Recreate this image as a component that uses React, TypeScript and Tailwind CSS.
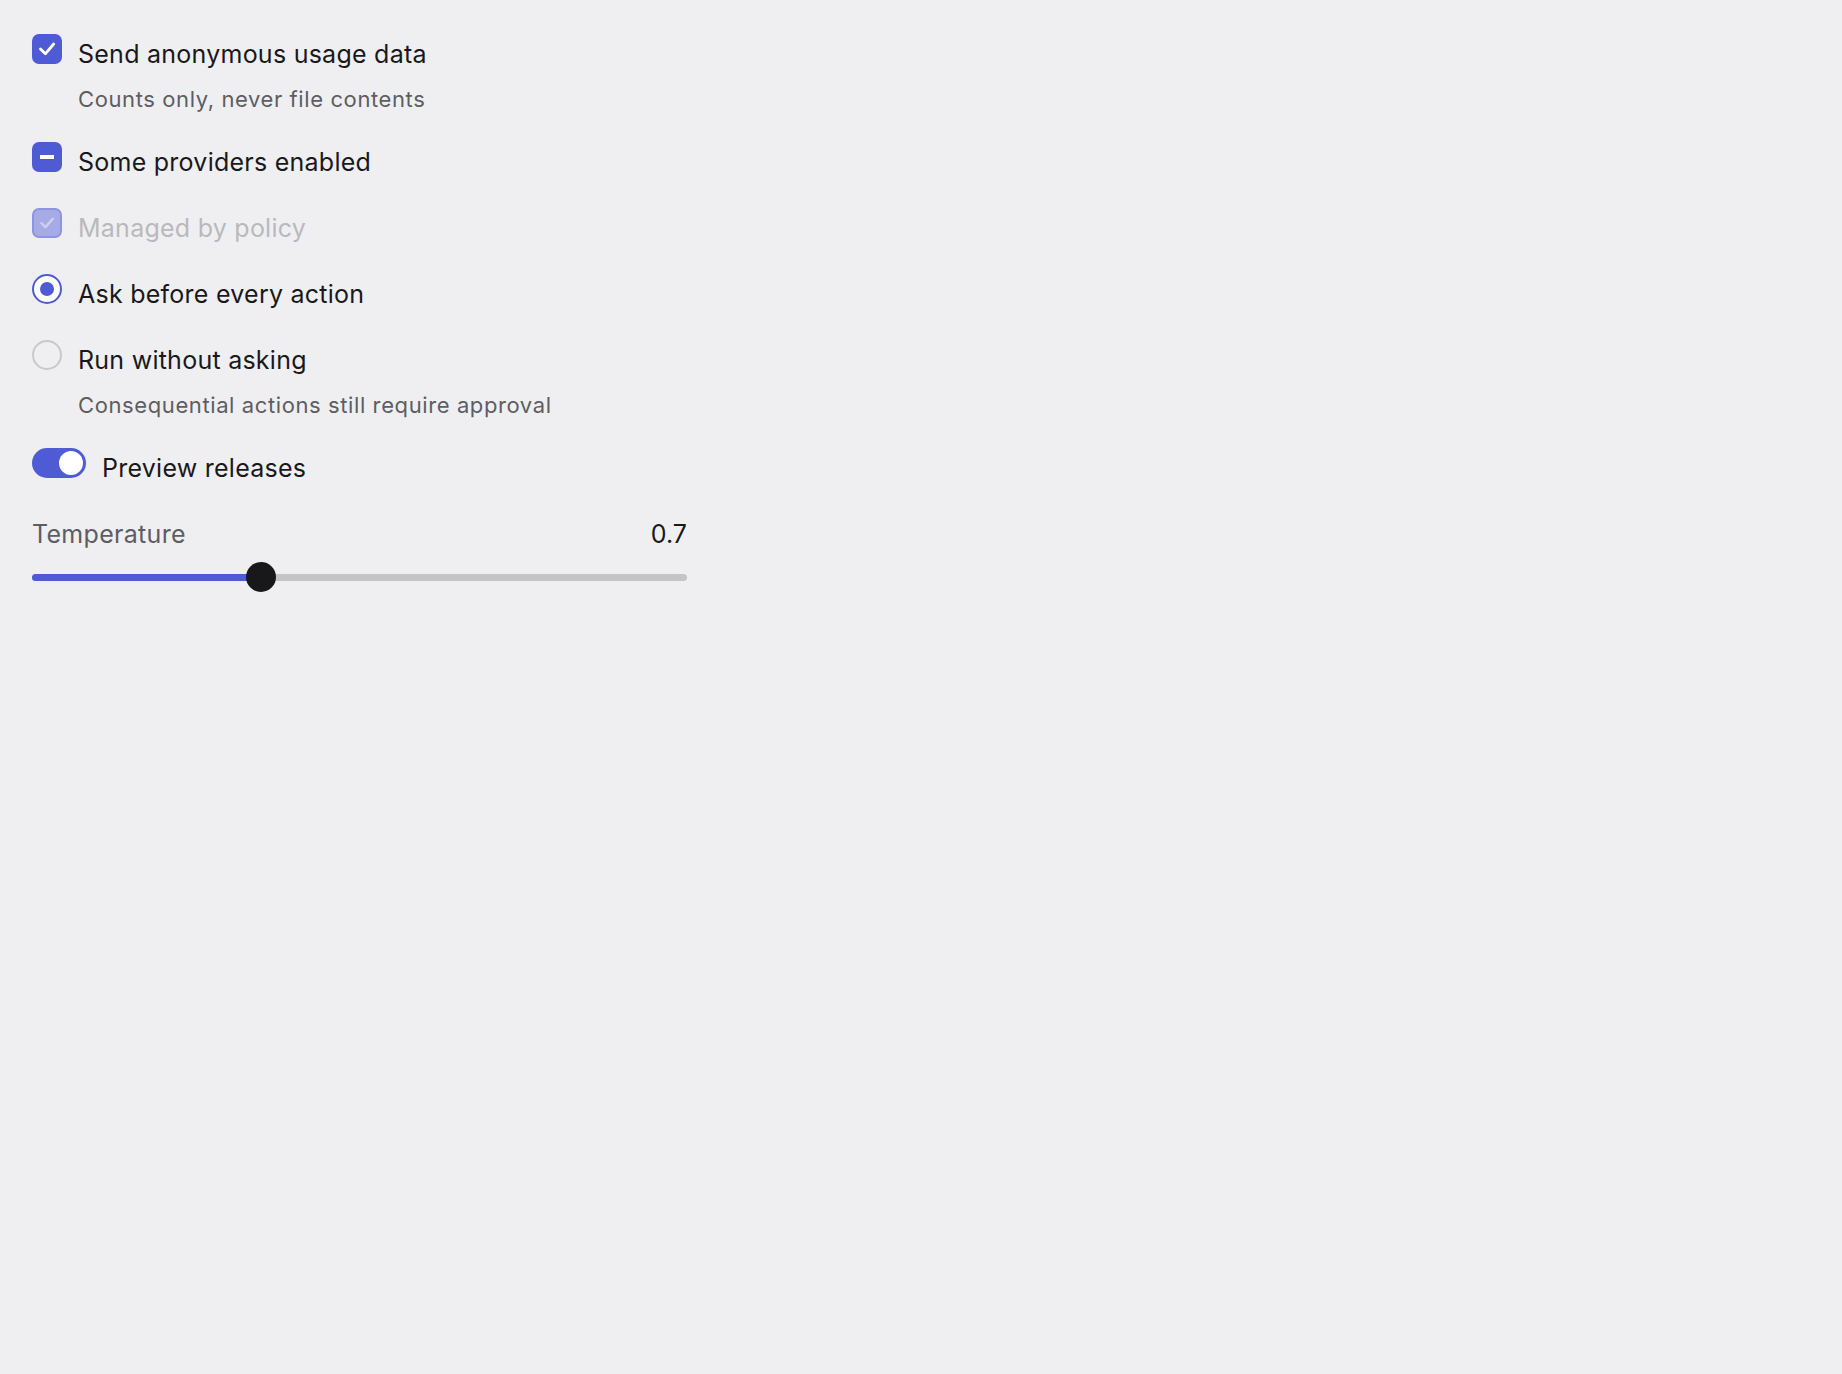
import React from "react";

type Control = "checked" | "mixed" | "disabled" | "radio-on" | "radio-off" | "switch-on";

const CheckMark = ({ className }: { className?: string }) => (
  <svg viewBox="0 0 30 30" className={className} fill="none">
    <path
      d="M8.5 15l4.8 4.8 8.4-9.8"
      stroke="currentColor"
      strokeWidth="2.8"
      strokeLinecap="round"
      strokeLinejoin="round"
    />
  </svg>
);

function ControlBox({ kind }: { kind: Control }) {
  if (kind === "checked")
    return (
      <span className="flex size-[30px] items-center justify-center rounded-[7px] bg-[#4f5bd5] text-white">
        <CheckMark className="size-[30px]" />
      </span>
    );
  if (kind === "mixed")
    return (
      <span className="flex size-[30px] items-center justify-center rounded-[7px] bg-[#4f5bd5]">
        <span className="h-[4px] w-[14px] bg-white" />
      </span>
    );
  if (kind === "disabled")
    return (
      <span className="flex size-[30px] items-center justify-center rounded-[7px] border-2 border-[#8c94e3] bg-[#a6abe6] text-[#ccd0f2]">
        <CheckMark className="size-[26px]" />
      </span>
    );
  if (kind === "radio-on")
    return (
      <span className="flex size-[30px] items-center justify-center rounded-full border-2 border-[#4f5bd5] bg-white">
        <span className="size-[14px] rounded-full bg-[#4f5bd5]" />
      </span>
    );
  if (kind === "radio-off")
    return <span className="block size-[30px] rounded-full border-2 border-[#c9c9cc]" />;
  return (
    <span className="flex h-[30px] w-[54px] items-center justify-end rounded-full bg-[#4f5bd5] pr-[3px]">
      <span className="size-[24px] rounded-full bg-white" />
    </span>
  );
}

function OptionRow({
  kind,
  label,
  hint,
  muted,
}: {
  kind: Control;
  label: string;
  hint?: string;
  muted?: boolean;
}) {
  return (
    <div className="flex items-start gap-4">
      <div className="-mt-[2px] shrink-0">
        <ControlBox kind={kind} />
      </div>
      <div className="flex flex-col">
        <span
          className={`text-[25px] leading-[36px] tracking-[0.25px] ${muted ? "text-[#b9b9bd]" : "text-[#19191c]"}`}
        >
          {label}
        </span>
        {hint && (
          <span className="mt-[12px] text-[22px] leading-[30px] tracking-[0.6px] text-[#5d5d63]">{hint}</span>
        )}
      </div>
    </div>
  );
}

export default function App() {
  const temperature = 0.7;
  const pct = (temperature / 2) * 100;

  return (
    <div className="min-h-screen bg-[#efeff1] font-['Inter','Noto_Sans',sans-serif]">
      <div className="flex w-[687px] flex-col gap-[30px] pl-8 pt-[36px]">
        <OptionRow kind="checked" label="Send anonymous usage data" hint="Counts only, never file contents" />
        <OptionRow kind="mixed" label="Some providers enabled" />
        <OptionRow kind="disabled" label="Managed by policy" muted />
        <OptionRow kind="radio-on" label="Ask before every action" />
        <OptionRow
          kind="radio-off"
          label="Run without asking"
          hint="Consequential actions still require approval"
        />
        <OptionRow kind="switch-on" label="Preview releases" />

        <div className="flex flex-col">
          <div className="flex items-center justify-between text-[25px] leading-[36px]">
            <span className="tracking-[0.3px] text-[#5d5d63]">Temperature</span>
            <span className="text-[#19191c]">{temperature}</span>
          </div>
          <div className="relative mt-[10px] flex h-[30px] items-center">
            <div className="h-[7px] w-full rounded-full bg-[#c4c4c6]" />
            <div className="absolute left-0 h-[7px] rounded-full bg-[#4f5bd5]" style={{ width: `${pct}%` }} />
            <div
              className="absolute size-[30px] -translate-x-1/2 rounded-full bg-[#18181b]"
              style={{ left: `${pct}%` }}
            />
          </div>
        </div>
      </div>
    </div>
  );
}
